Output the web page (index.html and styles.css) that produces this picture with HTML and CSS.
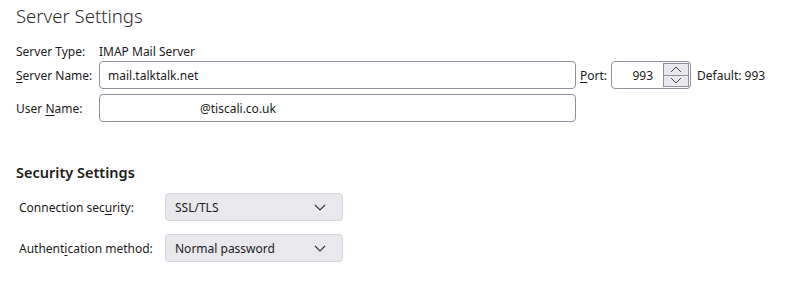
FILE: index.html
```html
<!DOCTYPE html>
<html>
<head>
<meta charset="utf-8">
<link rel="stylesheet" href="styles.css">
</head>
<body>
<div class="page">
  <h1 class="title">Server Settings</h1>
  <div class="row type-row">
    <span class="label">Server Type:</span>
    <span class="value">IMAP Mail Server</span>
  </div>
  <div class="row">
    <span class="label"><u>S</u>erver Name:</span>
    <div class="input wide"><span class="text">mail.talktalk.net</span></div>
    <span class="port-label"><u>P</u>ort:</span>
    <div class="input port">
      <span class="port-value">993</span>
      <div class="spinner">
        <div class="spin-btn"><svg width="12" height="7" viewBox="0 0 12 7"><path d="M1 6 L6 1 L11 6" fill="none" stroke="#444" stroke-width="1"/></svg></div>
        <div class="spin-btn"><svg width="12" height="7" viewBox="0 0 12 7"><path d="M1 1 L6 6 L11 1" fill="none" stroke="#444" stroke-width="1"/></svg></div>
      </div>
    </div>
    <span class="default">Default: 993</span>
  </div>
  <div class="row">
    <span class="label">User <u>N</u>ame:</span>
    <div class="input wide"><span class="text user">@tiscali.co.uk</span></div>
  </div>

  <h2 class="subtitle">Security Settings</h2>
  <div class="sec-row">
    <span class="sec-label">Connection sec<u>u</u>rity:</span>
    <div class="select"><span>SSL/TLS</span>
      <svg width="12" height="7" viewBox="0 0 12 7"><path d="M1 1 L6 6 L11 1" fill="none" stroke="#333" stroke-width="1.1"/></svg>
    </div>
  </div>
  <div class="sec-row">
    <span class="sec-label">Authent<u>i</u>cation method:</span>
    <div class="select"><span>Normal password</span>
      <svg width="12" height="7" viewBox="0 0 12 7"><path d="M1 1 L6 6 L11 1" fill="none" stroke="#333" stroke-width="1.1"/></svg>
    </div>
  </div>
</div>
</body>
</html>
```

FILE: styles.css
```css
html, body {
  margin: 0;
  padding: 0;
  background: #ffffff;
}
body {
  font-family: "Noto Sans", "Open Sans", sans-serif;
  font-size: 12px;
  color: #1b1b1b;
}
.page {
  padding: 4px 0 0 16px;
}
.title {
  margin: 0;
  font-size: 18.5px;
  font-weight: 300;
  color: #2b2b2b;
  line-height: 24px;
  height: 24px;
}
.row {
  display: flex;
  align-items: center;
  height: 28px;
  margin-bottom: 5px;
}
.type-row {
  height: 16px;
  margin-top: 15px;
  margin-bottom: 2px;
}
.label {
  width: 83px;
  flex: none;
}
u {
  text-decoration-thickness: 1px;
  text-underline-offset: 2px;
}
.input {
  box-sizing: border-box;
  height: 28px;
  border: 1px solid #8f8f9d;
  border-radius: 4px;
  display: flex;
  align-items: center;
  background: #fff;
}
.wide {
  width: 477px;
  padding-left: 8px;
}
.text.user {
  margin-left: 92px;
}
.port-label {
  margin-left: 4px;
  width: 31px;
}
.port {
  width: 80px;
  padding: 0 1px 0 0;
  justify-content: flex-end;
}
.port-value {
  margin-right: 10px;
}
.spinner {
  display: flex;
  flex-direction: column;
  border: 1px solid #8f8f9d;
  width: 26px;
  height: 24px;
  box-sizing: border-box;
  background: #e9e9ed;
}
.spin-btn {
  flex: 1;
  display: flex;
  align-items: center;
  justify-content: center;
}
.spin-btn + .spin-btn {
  border-top: 1px solid #8f8f9d;
}
.default {
  margin-left: 6px;
}
.subtitle {
  margin: 40px 0 0 0;
  font-size: 14.5px;
  font-weight: 600;
  line-height: 20px;
  color: #1b1b1b;
}
.sec-row {
  display: flex;
  align-items: center;
  height: 28px;
  margin-top: 11px;
  padding-left: 3px;
}
.sec-row + .sec-row {
  margin-top: 13px;
}
.sec-label {
  width: 146px;
  flex: none;
}
.select {
  box-sizing: border-box;
  width: 178px;
  height: 28px;
  background: #e9e9ed;
  border: 1px solid #d6d6dc;
  border-radius: 4px;
  display: flex;
  align-items: center;
  justify-content: space-between;
  padding: 0 16px 0 9px;
}
```
